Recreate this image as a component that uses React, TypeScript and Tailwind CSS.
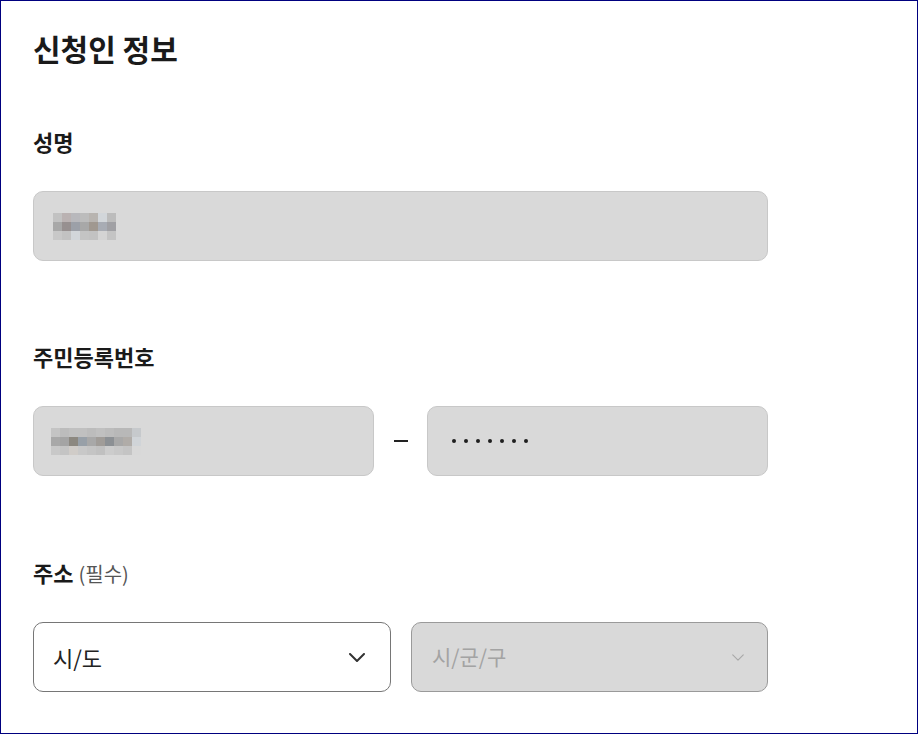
import React from "react";

const nameCells = [
  ["#c2c2c2", "#bab2b2", "#b8b8bc", "#bcbcbc", "#b8b4b0", "#d2d6da", "#bcbcbc"],
  ["#a8a8a8", "#979090", "#9ca0a8", "#a8a8a8", "#a09890", "#a8acb4", "#a0a0a4"],
  ["#c8c8c8", "#c2c2c2", "#d2d6da", "#c4c4c4", "#c2c2c2", "#d4d4d4", "#c4c4c4"],
];

const rrnCells = [
  ["#c4c4c4", "#bcbcbc", "#c0c0c0", "#c0c0c0", "#bcbcbc", "#c0c0c0", "#bcbcbc", "#b8b8b8", "#b8b8b8", "#c6c9cc"],
  ["#a8a8a8", "#a4a4a4", "#8c8880", "#98a0a8", "#a8a8a8", "#a09c98", "#8c9094", "#a8a8a8", "#b0aca8", "#d0d4d8"],
  ["#c8c8c8", "#c4c4c4", "#d0ccc8", "#c8c8c8", "#c4c4c4", "#c0c0c0", "#cccccc", "#c8c8c8", "#c4c4c4", "#d8d8d8"],
];

function Pixelated({ cells }: { cells: string[][] }) {
  return (
    <div className="flex flex-col">
      {cells.map((row, i) => (
        <div key={i} className="flex">
          {row.map((c, j) => (
            <div key={j} className="w-[9px] h-[9px]" style={{ backgroundColor: c }} />
          ))}
        </div>
      ))}
    </div>
  );
}

function Chevron({ className, stroke, width }: { className: string; stroke: string; width: number }) {
  return (
    <svg className={className} viewBox="0 0 16 9" fill="none">
      <path d="M1 1l7 7 7-7" stroke={stroke} strokeWidth={width} strokeLinecap="round" strokeLinejoin="round" />
    </svg>
  );
}

export default function App() {
  const font = { fontFamily: '"Noto Sans CJK KR", "Noto Sans", sans-serif' };
  return (
    <div className="w-[918px] h-[734px] border border-[#00007f] bg-white" style={font}>
      <div className="pl-[32px] pt-[31px] w-[767px]">
        <h1 className="h-[36px] text-[30px] leading-[32px] font-bold text-[#1a1a1a]">신청인 정보</h1>

        <div className="mt-[60px]">
          <div className="h-[30px] text-[22px] leading-[26px] font-bold text-[#1a1a1a]">성명</div>
          <div className="mt-[33px] h-[70px] w-[735px] rounded-[10px] border border-[#c8c8c8] bg-[#d9d9d9] flex items-center pl-[19px]">
            <Pixelated cells={nameCells} />
          </div>
        </div>

        <div className="mt-[82px]">
          <div className="h-[30px] text-[22px] leading-[26px] font-bold text-[#1a1a1a]">주민등록번호</div>
          <div className="mt-[33px] flex items-center w-[735px]">
            <div className="h-[70px] w-[341px] rounded-[10px] border border-[#c8c8c8] bg-[#d9d9d9] flex items-center pl-[17px]">
              <Pixelated cells={rrnCells} />
            </div>
            <div className="w-[53px] flex justify-center">
              <div className="w-[14px] h-[2px] bg-[#222]" />
            </div>
            <div className="h-[70px] w-[341px] rounded-[10px] border border-[#c8c8c8] bg-[#d9d9d9] flex items-center pl-[24px] gap-[8px]">
              {Array.from({ length: 7 }).map((_, i) => (
                <div key={i} className="w-[4px] h-[4px] rounded-full bg-[#1e1e1e]" />
              ))}
            </div>
          </div>
        </div>

        <div className="mt-[83px]">
          <div className="h-[30px] flex items-baseline">
            <span className="text-[22px] leading-[26px] font-bold text-[#1a1a1a]">주소</span>
            <span className="ml-[5px] text-[20px] leading-[26px] text-[#555]">(필수)</span>
          </div>
          <div className="mt-[33px] grid grid-cols-[358px_357px] gap-[20px] w-[735px]">
            <div className="h-[70px] rounded-[10px] border border-[#767676] bg-white flex items-center justify-between pl-[19px] pr-[25px]">
              <span className="text-[22px] text-[#222]">시/도</span>
              <Chevron className="w-[16px] h-[9px]" stroke="#333" width={2} />
            </div>
            <div className="h-[70px] rounded-[10px] border border-[#9a9a9a] bg-[#d9d9d9] flex items-center justify-between pl-[20px] pr-[23px]">
              <span className="text-[21px] text-[#a3a3a3]">시/군/구</span>
              <Chevron className="w-[12px] h-[7px]" stroke="#a8a8a8" width={1.5} />
            </div>
          </div>
        </div>
      </div>
    </div>
  );
}
